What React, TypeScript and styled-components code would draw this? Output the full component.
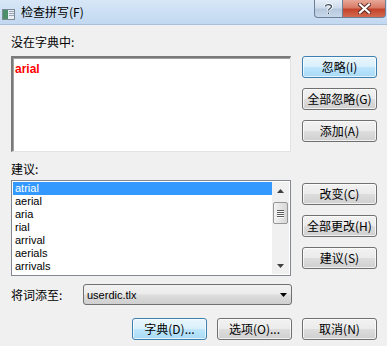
import React from "react";
import styled, { createGlobalStyle, css } from "styled-components";

const Global = createGlobalStyle`
  html, body { margin: 0; padding: 0; background: #f0f0f0; }
  body { font-family: "Noto Sans CJK SC", "Liberation Sans", sans-serif; font-size: 12px; color: #000; }
`;

const Window = styled.div`
  width: 387px;
  height: 346px;
  background: #f0f0f0;
  display: flex;
  flex-direction: column;
  overflow: hidden;
`;

const TitleBar = styled.div`
  height: 24px;
  border-bottom: 1px solid #a9bfd8;
  background: linear-gradient(to bottom, #d8e7f7 0%, #cadef3 60%, #c2d8f1 100%);
  display: flex;
  align-items: flex-start;
`;

const TitleIcon = styled.div`
  margin: 6px 0 0 2px;
  width: 13px;
  height: 11px;
`;

const TitleText = styled.div`
  margin: 4px 0 0 6px;
  font-size: 12px;
  line-height: 16px;
  color: #000;
  flex: 1;
`;

const CaptionBtns = styled.div`
  display: flex;
  margin-right: 1px;
`;

const CapBtn = styled.div<{ $close?: boolean }>`
  height: 18px;
  box-sizing: border-box;
  display: flex;
  align-items: center;
  justify-content: center;
  border: 1px solid #6d7f96;
  border-top: none;
  ${(p) =>
    p.$close
      ? css`
          width: 43px;
          border-left: none;
          border-radius: 0 0 4px 0;
          background: linear-gradient(to bottom, #e8a898 0%, #d77b66 45%, #c4432b 55%, #d36a4e 100%);
        `
      : css`
          width: 29px;
          border-radius: 0 0 0 4px;
          background: linear-gradient(to bottom, #e6eef8 0%, #cfdcec 45%, #b7c8de 55%, #c8d8ea 100%);
        `}
`;

const Body = styled.div`
  flex: 1;
  display: flex;
  flex-direction: column;
  padding: 9px 10px 0 11px;
`;

const Section = styled.div<{ $mt?: number }>`
  display: flex;
  gap: 11px;
  margin-top: ${(p) => p.$mt ?? 0}px;
`;

const LeftCol = styled.div`
  width: 281px;
  display: flex;
  flex-direction: column;
`;

const Label = styled.div<{ $mb: number }>`
  line-height: 16px;
  height: 16px;
  margin-bottom: ${(p) => p.$mb}px;
  font-size: 12px;
`;

const BtnCol = styled.div<{ $top: number }>`
  display: flex;
  flex-direction: column;
  gap: 10px;
  padding-top: ${(p) => p.$top}px;
`;

const Btn = styled.div<{ $default?: boolean; $w?: number }>`
  width: ${(p) => p.$w ?? 75}px;
  height: 22px;
  box-sizing: border-box;
  border: 1px solid #707070;
  border-radius: 3px;
  display: flex;
  align-items: center;
  justify-content: center;
  font-size: 12px;
  line-height: 16px;
  background: linear-gradient(to bottom, #f2f2f2 0%, #ebebeb 48%, #dddddd 52%, #cfcfcf 100%);
  box-shadow: inset 0 0 0 1px rgba(255, 255, 255, 0.7);
  ${(p) =>
    p.$default &&
    css`
      border-color: #3c7fb1;
      background: linear-gradient(to bottom, #eaf6fd 0%, #d9f0fc 48%, #bee6fd 52%, #a7d9f5 100%);
    `}
`;

const TextBox = styled.div`
  height: 96px;
  box-sizing: border-box;
  background: #fff;
  border-style: solid;
  border-width: 2px 1px 1px 2px;
  border-color: #7a7a7a #e3e3e3 #e3e3e3 #7a7a7a;
  box-shadow: inset 1px 1px 0 #a0a0a0;
  padding: 1px 2px;
`;

const Misspelled = styled.span`
  color: #ff0000;
  font-family: "Liberation Sans", sans-serif;
  font-weight: bold;
  font-size: 12px;
  line-height: 14px;
`;

const ListBox = styled.div`
  height: 96px;
  box-sizing: border-box;
  border: 1px solid #828790;
  background: #fff;
  display: flex;
  padding: 1px;
`;

const Items = styled.div`
  flex: 1;
  display: flex;
  flex-direction: column;
  overflow: hidden;
`;

const Item = styled.div<{ $sel?: boolean }>`
  height: 13px;
  line-height: 13px;
  font-family: "Liberation Sans", sans-serif;
  font-size: 11px;
  padding-left: 2px;
  flex-shrink: 0;
  ${(p) =>
    p.$sel &&
    css`
      background: #3399ff;
      color: #fff;
    `}
`;

const ScrollBar = styled.div`
  width: 17px;
  background: #f0f0f0;
  display: flex;
  flex-direction: column;
  align-items: center;
`;

const ScrollArrow = styled.div`
  height: 17px;
  width: 17px;
  display: flex;
  align-items: center;
  justify-content: center;
`;

const Thumb = styled.div`
  width: 15px;
  height: 22px;
  margin-top: 3px;
  box-sizing: border-box;
  border: 1px solid #979797;
  border-radius: 2px;
  background: linear-gradient(to right, #f3f3f3, #e2e2e2 60%, #d6d6d6);
  display: flex;
  flex-direction: column;
  align-items: center;
  justify-content: center;
  gap: 1px;
`;

const Grip = styled.div`
  width: 7px;
  height: 1px;
  background: #5a5a5a;
  box-shadow: 0 1px 0 #fff;
`;

const Track = styled.div`
  flex: 1;
`;

const AddRow = styled.div`
  display: flex;
  align-items: center;
  margin-top: 8px;
  height: 21px;
`;

const AddLabel = styled.div`
  width: 72px;
  font-size: 12px;
  line-height: 16px;
`;

const Select = styled.div`
  width: 209px;
  height: 21px;
  box-sizing: border-box;
  border: 1px solid #707070;
  border-radius: 3px;
  background: linear-gradient(to bottom, #f2f2f2 0%, #ebebeb 48%, #dddddd 52%, #cfcfcf 100%);
  display: flex;
  align-items: center;
  padding: 0 4px 0 3px;
  font-family: "Liberation Sans", sans-serif;
  font-size: 11px;
`;

const SelectValue = styled.div`
  flex: 1;
`;

const BottomRow = styled.div`
  display: flex;
  justify-content: flex-end;
  gap: 10px;
  margin-top: 13px;
`;

const ArrowDown = ({ color = "#000" }: { color?: string }) => (
  <svg width={7} height={4} viewBox="0 0 7 4">
    <path d="M0 0 H7 L3.5 4 Z" fill={color} />
  </svg>
);

const ArrowUp = ({ color = "#000" }: { color?: string }) => (
  <svg width={7} height={4} viewBox="0 0 7 4">
    <path d="M0 4 H7 L3.5 0 Z" fill={color} />
  </svg>
);

const suggestions = ["atrial", "aerial", "aria", "rial", "arrival", "aerials", "arrivals"];

export default function App() {
  return (
    <Window>
      <Global />
      <TitleBar>
        <TitleIcon>
          <svg width="13" height="11" viewBox="0 0 13 11">
            <rect x="0.5" y="0.5" width="12" height="10" fill="#e8eef4" stroke="#7d8a96" />
            <rect x="1" y="1" width="5" height="9" fill="#4e8f6b" />
            <rect x="7" y="2" width="5" height="1" fill="#9aa6b2" />
            <rect x="7" y="4" width="5" height="1" fill="#9aa6b2" />
            <rect x="7" y="6" width="5" height="1" fill="#9aa6b2" />
          </svg>
        </TitleIcon>
        <TitleText>检查拼写(F)</TitleText>
        <CaptionBtns>
          <CapBtn>
            <svg width="9" height="12" viewBox="0 0 9 12">
              <path
                d="M1.5 3.5 C1.5 1 7.5 1 7.5 3.5 C7.5 5.5 4.5 5.5 4.5 7.5 M4.5 9.5 V11"
                fill="none"
                stroke="#fff"
                strokeWidth="3"
              />
              <path
                d="M1.5 3.5 C1.5 1 7.5 1 7.5 3.5 C7.5 5.5 4.5 5.5 4.5 7.5 M4.5 9.5 V11"
                fill="none"
                stroke="#3f4c5c"
                strokeWidth="1.3"
              />
            </svg>
          </CapBtn>
          <CapBtn $close>
            <svg width="13" height="11" viewBox="0 0 13 11">
              <path d="M2 1.5 L11 9.5 M11 1.5 L2 9.5" stroke="#5a2a22" strokeWidth="4" strokeLinecap="square" />
              <path d="M2 1.5 L11 9.5 M11 1.5 L2 9.5" stroke="#fff" strokeWidth="2.2" strokeLinecap="square" />
            </svg>
          </CapBtn>
        </CaptionBtns>
      </TitleBar>
      <Body>
        <Section>
          <LeftCol>
            <Label $mb={6}>没在字典中:</Label>
            <TextBox>
              <Misspelled>arial</Misspelled>
            </TextBox>
          </LeftCol>
          <BtnCol $top={22}>
            <Btn $default>忽略(I)</Btn>
            <Btn>全部忽略(G)</Btn>
            <Btn>添加(A)</Btn>
          </BtnCol>
        </Section>
        <Section $mt={9}>
          <LeftCol>
            <Label $mb={3}>建议:</Label>
            <ListBox>
              <Items>
                {suggestions.map((s, i) => (
                  <Item key={s} $sel={i === 0}>
                    {s}
                  </Item>
                ))}
              </Items>
              <ScrollBar>
                <ScrollArrow>
                  <ArrowUp color="#404040" />
                </ScrollArrow>
                <Thumb>
                  <Grip />
                  <Grip />
                  <Grip />
                  <Grip />
                </Thumb>
                <Track />
                <ScrollArrow>
                  <ArrowDown color="#404040" />
                </ScrollArrow>
              </ScrollBar>
            </ListBox>
          </LeftCol>
          <BtnCol $top={22}>
            <Btn>改变(C)</Btn>
            <Btn>全部更改(H)</Btn>
            <Btn>建议(S)</Btn>
          </BtnCol>
        </Section>
        <AddRow>
          <AddLabel>将词添至:</AddLabel>
          <Select>
            <SelectValue>userdic.tlx</SelectValue>
            <ArrowDown />
          </Select>
        </AddRow>
        <BottomRow>
          <Btn $default>字典(D)...</Btn>
          <Btn>选项(O)...</Btn>
          <Btn>取消(N)</Btn>
        </BottomRow>
      </Body>
    </Window>
  );
}
